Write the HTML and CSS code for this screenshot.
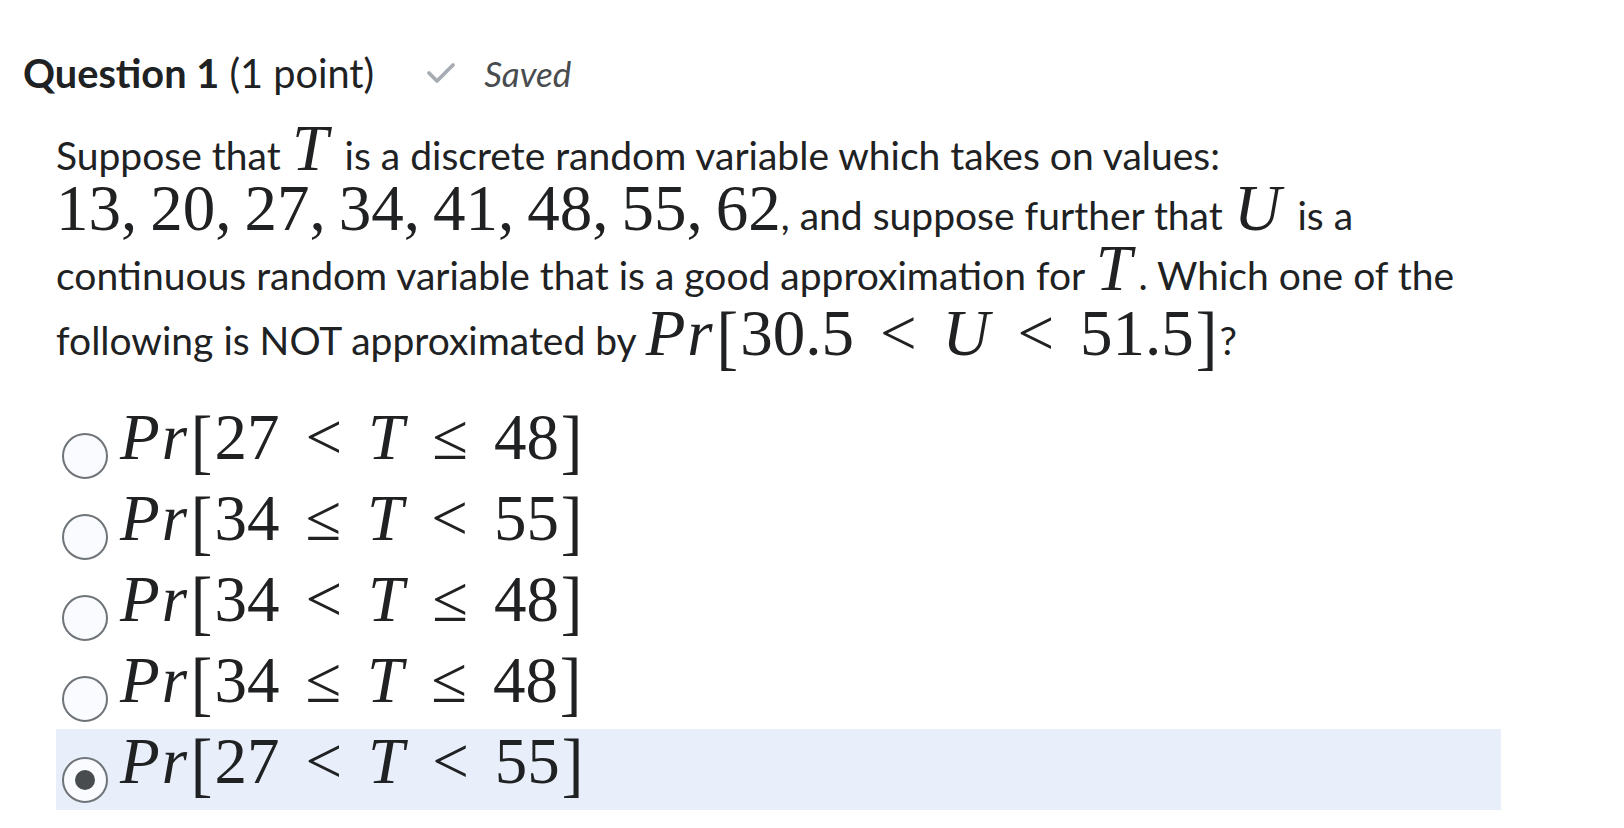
FILE: index.html
```html
<!DOCTYPE html>
<html lang="en">
<head>
<meta charset="utf-8">
<title>Question 1</title>
<link rel="stylesheet" href="styles.css">
</head>
<body>
<div class="question">
  <div class="q-header">
    <span class="q-title"><b>Question 1</b> (1 point)</span>
    <svg class="saved-icon" width="30" height="22" viewBox="0 0 30 22"><polyline points="3,11 11,19 27,3" fill="none" stroke="#a6acb1" stroke-width="3.8" stroke-linecap="round" stroke-linejoin="round"/></svg>
    <span class="saved">Saved</span>
  </div>
  <p class="q-body">Suppose that <span class="math var"><i>T</i></span> is a discrete random variable which takes on values:<br><span class="math">13,&thinsp;20,&thinsp;27,&thinsp;34,&thinsp;41,&thinsp;48,&thinsp;55,&thinsp;62</span>, and suppose further that <span class="math var"><i>U</i></span> is a<br>continuous random variable that is a good approximation for <span class="math var"><i>T</i></span>. Which one of the<br>following is NOT approximated by <span class="math"><i>P</i><i>r</i><span class="delim">[</span>30.5<span class="rel">&lt;</span><i>U</i><span class="rel">&lt;</span>51.5<span class="delim">]</span></span>?</p>
  <div class="options">
    <label class="option"><input type="radio" name="q1"><span class="math"><i>P</i><i>r</i><span class="delim">[</span>27<span class="rel">&lt;</span><i>T</i><span class="rel">≤</span>48<span class="delim">]</span></span></label>
    <label class="option"><input type="radio" name="q1"><span class="math"><i>P</i><i>r</i><span class="delim">[</span>34<span class="rel">≤</span><i>T</i><span class="rel">&lt;</span>55<span class="delim">]</span></span></label>
    <label class="option"><input type="radio" name="q1"><span class="math"><i>P</i><i>r</i><span class="delim">[</span>34<span class="rel">&lt;</span><i>T</i><span class="rel">≤</span>48<span class="delim">]</span></span></label>
    <label class="option"><input type="radio" name="q1"><span class="math"><i>P</i><i>r</i><span class="delim">[</span>34<span class="rel">≤</span><i>T</i><span class="rel">≤</span>48<span class="delim">]</span></span></label>
    <label class="option selected"><input type="radio" name="q1" checked><span class="math"><i>P</i><i>r</i><span class="delim">[</span>27<span class="rel">&lt;</span><i>T</i><span class="rel">&lt;</span>55<span class="delim">]</span></span></label>
  </div>
</div>
</body>
</html>
```
FILE: styles.css
```css
body {
  margin: 0;
  background: #ffffff;
  color: #202122;
  font-family: Lato, "Noto Sans", sans-serif;
}

.question {
  padding: 49px 0 0 23px;
}

.q-header {
  display: flex;
  align-items: center;
  height: 48px;
}

.q-title {
  font-size: 39.7px;
  line-height: 48px;
}

.q-title b {
  font-weight: 700;
}

.saved-icon {
  margin-left: 52px;
}

.saved {
  margin-left: 28px;
  font-size: 35px;
  font-style: italic;
  color: #494c4e;
}

.q-body {
  margin: 28px 0 0 33px;
  font-size: 39px;
  line-height: 60px;
}

.math {
  font-family: "Liberation Serif", "Times New Roman", serif;
  font-size: 65px;
  line-height: 0;
  white-space: nowrap;
}

.math i {
  font-style: italic;
  margin-right: 0.03em;
}

.math.var i {
  margin: 0 0.1em 0 0.02em;
}

.rel {
  margin: 0 0.4em;
}

.delim {
  display: inline-block;
  line-height: 56px;
  margin: 0 0.03em;
  transform: scaleY(1.1) translateY(3px);
}

.options {
  margin: 35px 0 0 33px;
  width: 1445px;
  display: flex;
  flex-direction: column;
}

.option {
  display: flex;
  align-items: flex-start;
  gap: 12px;
  height: 81px;
  padding-left: 6px;
  box-sizing: border-box;
}

.option.selected {
  background: #e8effa;
}

.option .math {
  line-height: 64px;
}

.option .delim {
  line-height: 64px;
}

.option input {
  appearance: none;
  -webkit-appearance: none;
  margin: 28px 0 0 0;
  width: 46px;
  height: 46px;
  box-sizing: border-box;
  border: 2px solid #6e7477;
  border-radius: 50%;
  background: #f9fbff;
  display: flex;
  align-items: center;
  justify-content: center;
  flex: none;
}

.option input:checked::after {
  content: "";
  width: 20px;
  height: 20px;
  border-radius: 50%;
  background: #494c4e;
}
```
